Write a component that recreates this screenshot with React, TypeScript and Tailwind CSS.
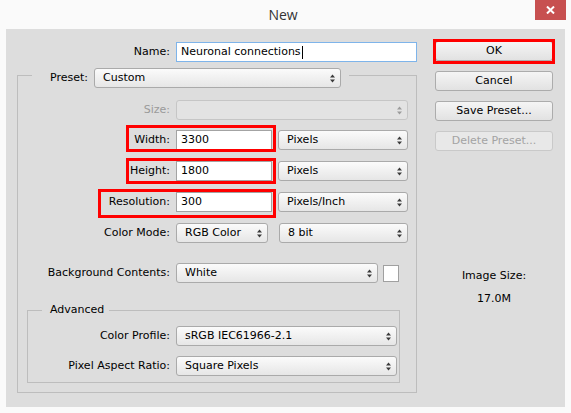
import React from "react";

function Arrows({ disabled }: { disabled?: boolean }) {
  const c = disabled ? "#9c9c9c" : "#3a3a3a";
  return (
    <svg width="5" height="9" viewBox="0 0 5 9" className="shrink-0">
      <path d="M0 3.5 L2.5 0.5 L5 3.5 Z" fill={c} />
      <path d="M0 5.5 L5 5.5 L2.5 8.5 Z" fill={c} />
    </svg>
  );
}

function Select({ text, w, disabled }: { text?: string; w: string; disabled?: boolean }) {
  return (
    <div
      className={`flex h-[20px] shrink-0 items-center rounded-[3px] border pl-[8px] pr-[5px] ${w} ${
        disabled
          ? "border-[#c6c6c6] bg-[#e3e3e3]"
          : "border-[#aaaaaa] bg-linear-to-b from-[#fbfbfb] to-[#e6e6e6]"
      }`}
    >
      <span className="flex-1 truncate">{text}</span>
      <Arrows disabled={disabled} />
    </div>
  );
}

function Field({ value, w }: { value: string; w: string }) {
  return (
    <div className={`flex h-[20px] shrink-0 items-center border border-[#a3a3a3] bg-white pl-[4px] ${w}`}>
      {value}
    </div>
  );
}

function Btn({ children, disabled }: { children: React.ReactNode; disabled?: boolean }) {
  return (
    <div
      className={`flex h-[20px] w-[118px] items-center justify-center rounded-[3px] border ${
        disabled
          ? "border-[#c9c9c9] bg-[#e8e8e8] text-[#a3a3a3]"
          : "border-[#acacac] bg-linear-to-b from-[#f5f5f5] to-[#e2e2e2] text-black"
      }`}
    >
      {children}
    </div>
  );
}

export default function App() {
  return (
    <div className="flex h-[413px] w-[571px] flex-col overflow-hidden bg-[#fafafa] font-['DejaVu_Sans',sans-serif] text-[11px] leading-[14px] text-black">
      {/* Title bar */}
      <div className="flex h-[29px] shrink-0">
        <div className="flex-1" />
        <div className="flex items-center font-['Open_Sans',sans-serif] text-[14px] text-[#333333]">New</div>
        <div className="flex flex-1 justify-end pr-[5px]">
          <div className="flex h-[20px] w-[31px] items-center justify-center bg-[#c75050]">
            <svg width="9" height="8" viewBox="0 0 9 8">
              <path d="M1 0.5 L8 7.5 M8 0.5 L1 7.5" stroke="white" strokeWidth="2" />
            </svg>
          </div>
        </div>
      </div>

      {/* Dialog body */}
      <div className="mx-[6px] flex h-[378px] shrink-0 bg-[#dddddd]">
        {/* Left column */}
        <div className="w-[429px] shrink-0 pl-[11px] pt-[13px]">
          <div className="flex h-[20px] items-center gap-[6px]">
            <div className="w-[153px] text-right">Name:</div>
            <div className="flex h-[20px] w-[241px] items-center border border-[#7eb4ea] bg-white pl-[4px]">
              Neuronal connections
              <span className="ml-[1px] inline-block h-[13px] w-[1px] bg-black" />
            </div>
          </div>

          <fieldset className="w-[400px] border border-[#bdbdbd] pb-[9px]">
            <legend className="ml-[14px] pl-[4px] pr-[8px] pt-[6px]">
              <div className="flex items-center gap-[6px]">
                <span className="w-[52px] text-right">Preset:</span>
                <Select w="w-[247px]" text="Custom" />
              </div>
            </legend>

            <div className="flex flex-col pt-[12px]">
              {/* Size */}
              <div className="flex h-[20px] items-center gap-[6px]">
                <div className="w-[152px] text-right text-[#9a9a9a]">Size:</div>
                <Select w="w-[232px]" disabled />
              </div>

              {/* Width */}
              <div className="mt-[10px] flex h-[20px] items-center gap-[6px]">
                <div className="relative flex items-center gap-[6px]">
                  <div className="w-[152px] text-right">Width:</div>
                  <Field value="3300" w="w-[96px]" />
                  <div className="pointer-events-none absolute bottom-[-2px] left-[108px] right-[-4px] top-[-5px] border-[3px] border-[#ff0000]" />
                </div>
                <Select w="w-[130px]" text="Pixels" />
              </div>

              {/* Height */}
              <div className="mt-[11px] flex h-[20px] items-center gap-[6px]">
                <div className="relative flex items-center gap-[6px]">
                  <div className="w-[152px] text-right">Height:</div>
                  <Field value="1800" w="w-[96px]" />
                  <div className="pointer-events-none absolute bottom-[-3px] left-[108px] right-[-4px] top-[-3px] border-[3px] border-[#ff0000]" />
                </div>
                <Select w="w-[130px]" text="Pixels" />
              </div>

              {/* Resolution */}
              <div className="mt-[11px] flex h-[20px] items-center gap-[6px]">
                <div className="relative flex items-center gap-[6px]">
                  <div className="w-[152px] text-right">Resolution:</div>
                  <Field value="300" w="w-[96px]" />
                  <div className="pointer-events-none absolute bottom-[-6px] left-[80px] right-[-4px] top-[-3px] border-[3px] border-[#ff0000]" />
                </div>
                <Select w="w-[130px]" text="Pixels/Inch" />
              </div>

              {/* Color Mode */}
              <div className="mt-[11px] flex h-[20px] items-center gap-[6px]">
                <div className="w-[152px] text-right">Color Mode:</div>
                <Select w="w-[92px]" text="RGB Color" />
                <div className="ml-[5px]">
                  <Select w="w-[129px]" text="8 bit" />
                </div>
              </div>

              {/* Background Contents */}
              <div className="mt-[20px] flex h-[20px] items-center">
                <div className="w-[152px] text-right">Background Contents:</div>
                <div className="ml-[6px]">
                  <Select w="w-[202px]" text="White" />
                </div>
                <div className="ml-[5px] h-[17px] w-[16px] border border-[#a0a0a0] bg-white" />
              </div>

              {/* Advanced */}
              <fieldset className="ml-[9px] mt-[20px] w-[373px] border border-[#bdbdbd] pb-[6px]">
                <legend className="ml-[14px] pl-[8px] pr-[5px]">Advanced</legend>
                <div className="flex flex-col pt-[9px]">
                  <div className="flex h-[20px] items-center gap-[6px]">
                    <div className="w-[142px] text-right">Color Profile:</div>
                    <Select w="w-[221px]" text="sRGB IEC61966-2.1" />
                  </div>
                  <div className="mt-[10px] flex h-[20px] items-center gap-[6px]">
                    <div className="w-[142px] text-right">Pixel Aspect Ratio:</div>
                    <Select w="w-[221px]" text="Square Pixels" />
                  </div>
                </div>
              </fieldset>
            </div>
          </fieldset>
        </div>

        {/* Right column */}
        <div className="flex w-[118px] shrink-0 flex-col pt-[12px]">
          <div className="relative">
            <Btn>OK</Btn>
            <div className="pointer-events-none absolute bottom-[-3px] left-[-2px] right-[-2px] top-[-2px] border-[3px] border-[#ff0000]" />
          </div>
          <div className="mt-[10px]">
            <Btn>Cancel</Btn>
          </div>
          <div className="mt-[10px]">
            <Btn>Save Preset...</Btn>
          </div>
          <div className="mt-[10px]">
            <Btn disabled>Delete Preset...</Btn>
          </div>
          <div className="mt-[118px] text-center">Image Size:</div>
          <div className="mt-[9px] text-center">17.0M</div>
        </div>
      </div>
    </div>
  );
}
